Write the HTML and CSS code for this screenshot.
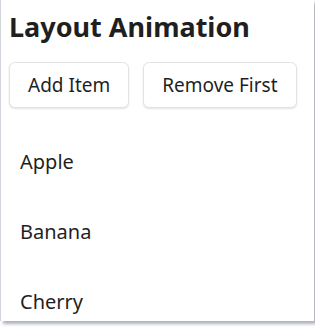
FILE: index.html
```html
<!DOCTYPE html>
<html lang="en">

<head>
    <meta charset="UTF-8">
    <meta name="viewport" content="width=device-width, initial-scale=1.0">
    <title>Layout Animation</title>
    <link rel="stylesheet" href="styles.css">
</head>

<body>
    <div class="panel">
        <h1>Layout Animation</h1>
        <div class="button-group">
            <button class="btn-add">Add Item</button>
            <button class="btn-remove">Remove First</button>
        </div>
        <ul class="item-list">
            <li>Apple</li>
            <li>Banana</li>
            <li>Cherry</li>
        </ul>
    </div>
</body>

</html>
```

FILE: styles.css
```css
body {
    margin: 0;
    min-height: 332px;
    background-color: #fff;
    font-family: "Noto Sans", "Open Sans", sans-serif;
    color: #1f1f1f;
}

.panel {
    width: 297px;
    height: 321px;
    padding: 0 8px;
    border-left: 1px solid #d2d4dc;
    background-color: #fff;
    box-shadow: 3px 3px 3px rgba(140, 145, 160, 0.7);
    overflow: hidden;
}

h1 {
    margin: 0;
    padding-top: 8px;
    font-size: 27px;
    line-height: 38px;
    font-weight: 700;
    color: #1f1f1f;
}

.button-group {
    display: flex;
    gap: 14px;
    margin-top: 16px;
}

button {
    height: 46px;
    padding: 0 18px;
    background-color: #fff;
    border: 1px solid #e4e4e4;
    border-radius: 6px;
    box-shadow: 0 1px 2px rgba(0, 0, 0, 0.12);
    font-family: inherit;
    font-size: 19px;
    color: #1f1f1f;
    cursor: pointer;
}

.item-list {
    list-style: none;
    margin: 19px 0 0;
    padding: 0;
}

.item-list li {
    height: 70px;
    line-height: 70px;
    padding-left: 11px;
    font-size: 20px;
}
```
